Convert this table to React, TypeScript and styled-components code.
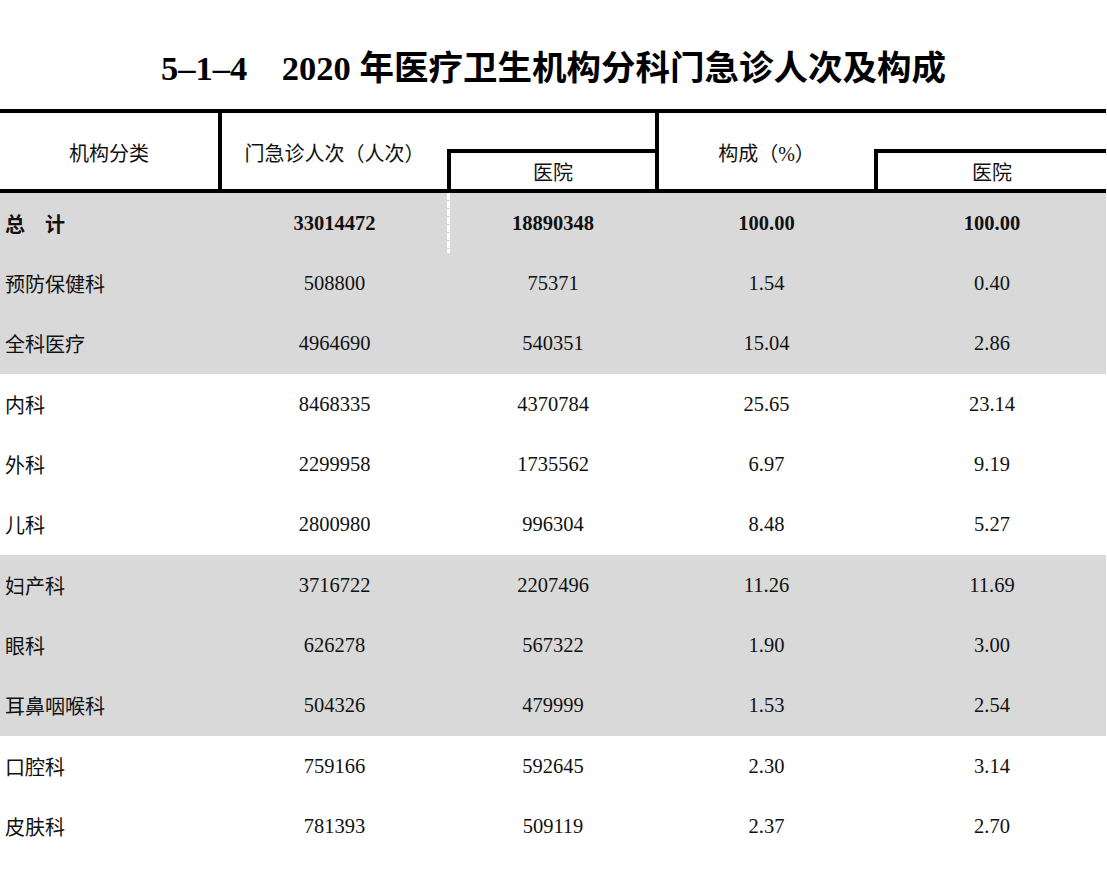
import React from 'react'
import styled, { createGlobalStyle } from 'styled-components'

const GlobalStyle = createGlobalStyle`
  html, body {
    margin: 0;
    padding: 0;
    background: #fff;
  }
  body {
    font-family: "Liberation Serif", "Noto Sans CJK SC", serif;
    color: #111;
  }
`

const GRAY = '#d9d9d9'
const LINE = '4px solid #000'

const Page = styled.div`
  width: 1107px;
  height: 876px;
  overflow: hidden;
`

const Title = styled.h1`
  margin: 0;
  padding-top: 48px;
  height: 61px;
  line-height: 40px;
  font-size: 34.5px;
  font-weight: bold;
  text-align: center;
  color: #000;
  white-space: pre;
`

const Table = styled.div`
  width: 1106px;
`

const Head = styled.div`
  display: grid;
  grid-template-columns: 222px 225px 212px 215px 232px;
  grid-template-rows: 36px 40px;
  border-top: ${LINE};
  border-bottom: ${LINE};
`

const HeadCell = styled.div<{ $col: number; $row: string; $right?: boolean; $sub?: boolean; $closed?: boolean }>`
  grid-column: ${p => p.$col};
  grid-row: ${p => p.$row};
  display: flex;
  align-items: center;
  justify-content: center;
  font-size: 20px;
  color: #111;
  border-right: ${p => (p.$right || p.$closed ? LINE : 'none')};
  border-top: ${p => (p.$sub ? LINE : 'none')};
  border-left: ${p => (p.$sub ? LINE : 'none')};
  padding-top: ${p => (p.$sub ? '1px' : '2px')};
`

const Body = styled.div`
  display: flex;
  flex-direction: column;
`

const Row = styled.div<{ $shade: boolean }>`
  display: grid;
  grid-template-columns: 222px 225px 212px 215px 232px;
  height: calc(181px / 3);
  background: ${p => (p.$shade ? GRAY : '#fff')};
`

const Label = styled.div<{ $bold: boolean }>`
  display: flex;
  align-items: center;
  padding-left: 5px;
  font-size: 20px;
  font-weight: ${p => (p.$bold ? 'bold' : 'normal')};
  white-space: pre;
`

const Num = styled.div<{ $bold: boolean; $pad: string; $seam?: boolean }>`
  display: flex;
  align-items: center;
  justify-content: center;
  padding: ${p => p.$pad};
  font-size: 20.5px;
  font-weight: ${p => (p.$bold ? 'bold' : 'normal')};
  background: ${p =>
    p.$seam ? 'linear-gradient(#fff 0 7px, transparent 7px) left top / 3px 8px repeat-y' : 'none'};
`

const rows: string[][] = [
  ['总　计', '33014472', '18890348', '100.00', '100.00'],
  ['预防保健科', '508800', '75371', '1.54', '0.40'],
  ['全科医疗', '4964690', '540351', '15.04', '2.86'],
  ['内科', '8468335', '4370784', '25.65', '23.14'],
  ['外科', '2299958', '1735562', '6.97', '9.19'],
  ['儿科', '2800980', '996304', '8.48', '5.27'],
  ['妇产科', '3716722', '2207496', '11.26', '11.69'],
  ['眼科', '626278', '567322', '1.90', '3.00'],
  ['耳鼻咽喉科', '504326', '479999', '1.53', '2.54'],
  ['口腔科', '759166', '592645', '2.30', '3.14'],
  ['皮肤科', '781393', '509119', '2.37', '2.70'],
]

// padding per number column so text centres between the rule lines
const pads = ['0', '0 4px', '0', '0 0 0 4px']

export default function App() {
  return (
    <Page>
      <GlobalStyle />
      <Title>{'5–1–4　2020 年医疗卫生机构分科门急诊人次及构成'}</Title>
      <Table>
        <Head>
          <HeadCell $col={1} $row="1 / 3" $right>机构分类</HeadCell>
          <HeadCell $col={2} $row="1 / 3">门急诊人次（人次）</HeadCell>
          <HeadCell $col={3} $row="1" $right />
          <HeadCell $col={3} $row="2" $sub $closed>医院</HeadCell>
          <HeadCell $col={4} $row="1 / 3">构成（%）</HeadCell>
          <HeadCell $col={5} $row="1" />
          <HeadCell $col={5} $row="2" $sub>医院</HeadCell>
        </Head>
        <Body>
          {rows.map((r, i) => {
            const bold = i === 0
            const shade = i < 3 || (i >= 6 && i < 9)
            return (
              <Row key={r[0]} $shade={shade}>
                <Label $bold={bold}>{r[0]}</Label>
                {r.slice(1).map((v, j) => (
                  <Num key={j} $bold={bold} $pad={pads[j]} $seam={i === 0 && j === 1}>
                    {v}
                  </Num>
                ))}
              </Row>
            )
          })}
        </Body>
      </Table>
    </Page>
  )
}
